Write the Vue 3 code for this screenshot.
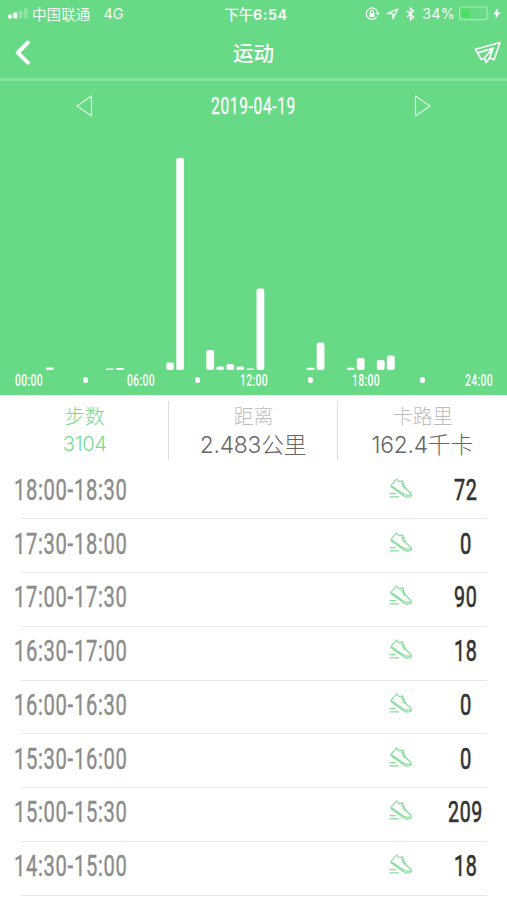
<script setup>
import { h } from 'vue'

// Condensed lettering: the text is squeezed to the given width.
const FitText = (props) =>
  h('svg', { width: props.w, height: props.height, class: 'fit' }, [
    h('text', { x: 0, y: props.base, 'font-size': props.size, textLength: props.w, lengthAdjust: 'spacingAndGlyphs' }, props.text)
  ])
FitText.props = ['text', 'w', 'height', 'base', 'size']

const bars = [
  { slot: 2, v: 2.4 }, { slot: 8, v: 1.6 }, { slot: 9, v: 2 }, { slot: 14, v: 7.5 },
  { slot: 15, v: 212 }, { slot: 18, v: 20 }, { slot: 19, v: 3.6 }, { slot: 20, v: 6 },
  { slot: 21, v: 3.6 }, { slot: 22, v: 1.6 }, { slot: 23, v: 81.5 }, { slot: 28, v: 2.2 },
  { slot: 29, v: 27.5 }, { slot: 32, v: 2.2 }, { slot: 33, v: 12 }, { slot: 35, v: 10 },
  { slot: 36, v: 14.5 }
]
const hours = ['00:00', '06:00', '12:00', '18:00', '24:00']
const rows = [
  ['18:00-18:30', '72'], ['17:30-18:00', '0'], ['17:00-17:30', '90'], ['16:30-17:00', '18'],
  ['16:00-16:30', '0'], ['15:30-16:00', '0'], ['15:00-15:30', '209'], ['14:30-15:00', '18']
]
const valueWidth = { 1: 12, 2: 23.5, 3: 35 }
</script>

<template>
  <main class="screen">
    <section class="top">
      <div class="status">
        <div class="side">
          <svg class="signal" width="20" height="12" fill="#fff">
            <rect x="0" y="6.5" width="4" height="4" rx="1" /><rect x="5.3" y="4.5" width="4" height="6" rx="1" />
            <rect x="10.6" y="2.5" width="4" height="8" rx="1" opacity=".25" /><rect x="15.9" y="0.5" width="4" height="10" rx="1" opacity=".25" />
          </svg>
          <span class="carrier">中国联通</span>
          <span class="net">4G</span>
        </div>
        <span class="time"><span class="noon">下午</span>6:54</span>
        <div class="side right">
          <svg width="15" height="14" viewBox="0 0 15 14" fill="none" stroke="#fff" stroke-width="1.2">
            <path d="M11.8 9.8A5.7 5.7 0 1 1 12.7 6" /><path d="M10.8 5.8h4l-2 2.6z" fill="#fff" stroke="none" />
            <rect x="4.5" y="6.2" width="5" height="3.8" fill="#fff" stroke="none" /><path d="M5.5 6.5V5a1.5 1.5 0 0 1 3 0v1.5" />
          </svg>
          <svg class="loc" width="13" height="12" viewBox="0 0 13 12" fill="none" stroke="#fff" stroke-width="1.3" stroke-linejoin="round"><path d="M1.2 5.7 11.8 1 7 10.8V5.7z" /></svg>
          <svg class="bt" width="9" height="14" viewBox="0 0 9 14" fill="none" stroke="#fff" stroke-width="1.4"><path d="M1 3.9 7.6 10 4.5 12.7V1.3L7.6 4 1 10.1" /></svg>
          <span class="pct">34%</span>
          <svg class="battery" width="32" height="15" viewBox="0 0 32 15">
            <rect x=".6" y="1" width="27.4" height="12.6" rx="2.4" fill="none" stroke="#a8e9b8" stroke-width="1.2" />
            <rect x="2.2" y="2.7" width="8.8" height="9.2" rx="1" fill="#4be264" /><path d="M30 5.5q1.5 1.8 0 3.6z" fill="#b6edc3" />
          </svg>
          <svg class="bolt" width="8" height="13" viewBox="0 0 8 13" fill="#fff"><path d="M4.7 1 .4 7.4h2.8L2.5 12l4.9-6.7H4.5z" /></svg>
        </div>
      </div>
      <header class="nav">
        <svg width="18" height="26" viewBox="0 0 18 26" fill="none" stroke="#fff" stroke-width="4" stroke-linejoin="round"><path d="M15 1.4 3.8 12.6 15 23.8" /></svg>
        <h1>运动</h1>
        <svg class="send" width="28" height="24" viewBox="0 0 28 24" fill="none" stroke="#fff" stroke-width="1.7" stroke-linejoin="round" stroke-linecap="round"><path d="M1.5 8.3 26 1.5 20 18.8l-4.2-2-3.8 4.8-1.4-4.4-3.4 1.2z" /><path d="M4.8 11.6 19 7.2 10.6 16.8M19 7.2l-3.2 9.4" /></svg>
      </header>
      <div class="date">
        <svg width="17" height="22" viewBox="0 0 17 22" fill="none" stroke="#d9f6df" stroke-width="1.2" stroke-linejoin="round"><path d="M15.5 1v20L1 11z" /></svg>
        <FitText class="day" text="2019-04-19" :w="85" :height="24" :base="20.4" :size="24" />
        <svg width="17" height="22" viewBox="0 0 17 22" fill="none" stroke="#d9f6df" stroke-width="1.2" stroke-linejoin="round"><path d="M1.5 1v20L16 11z" /></svg>
      </div>
      <svg class="chart" width="507" height="240" fill="#fff">
        <rect v-for="b in bars" :key="b.slot" :x="25.8 + b.slot * 10.03" :y="240 - b.v" width="7.8" :height="b.v" :rx="Math.min(2, b.v / 2)" />
      </svg>
      <div class="axis">
        <template v-for="(t, i) in hours" :key="t">
          <i v-if="i" class="dot"></i>
          <FitText :text="t" :w="28" :height="16" :base="13.5" :size="15.8" />
        </template>
      </div>
    </section>
    <section class="summary">
      <div class="cell active"><span class="label">步数</span><span class="num small">3104</span></div>
      <div class="cell"><span class="label">距离</span><span class="num">2.483公里</span></div>
      <div class="cell"><span class="label">卡路里</span><span class="num">162.4千卡</span></div>
    </section>
    <ul class="list">
      <li v-for="r in rows" :key="r[0]">
        <FitText class="period" :text="r[0]" :w="113.5" :height="30" :base="24.4" :size="29.8" />
        <svg class="shoe" width="24" height="22" viewBox="0 0 24 22" fill="none" stroke="#86dd9c" stroke-width="1.2" stroke-linejoin="round" stroke-linecap="round">
          <path d="M2.3 6.8 7.8.9q.8 2 2.3 2.5 1.8.5 3.5-.7l1.1 4.5 1.5 2.8 5.5 5.3q1.6 2.8-.8 3.4-2.8 1-5.9-.8L2.4 8.9q-1-.9-.1-2.1z" />
          <path d="M2.6 7.8 14.7 16.2q2.8 1.6 6.8.6M12.4 6l2-.9M13.4 8.1l2-.9M14.6 10.1l1.8-.9M1 15.6h5.3M1 18.8h8.5" />
        </svg>
        <span class="value"><FitText :text="r[1]" :w="valueWidth[r[1].length]" :height="30" :base="24.4" :size="29.8" /></span>
      </li>
    </ul>
  </main>
</template>

<style>
body { margin: 0; background: #fff; }
</style>
<style scoped>
.screen { width: 507px; height: 900px; overflow: hidden; background: #fff; font-family: Inter, "Noto Sans CJK SC", sans-serif; }
.fit { display: block; overflow: visible; font-family: Roboto, sans-serif; fill: currentColor; flex: none; letter-spacing: 1px; }
.top { height: 394.5px; background: #68d985; color: #fff; }
.status { height: 27px; display: grid; grid-template-columns: 1fr auto 1fr; align-items: center; padding: 0 6px 0 8px; }
.side { display: flex; align-items: center; height: 27px; }
.right { justify-content: flex-end; }
.carrier { font-size: 14.6px; margin-left: 4px; opacity: .9; }
.net { font-size: 14.5px; margin-left: 13px; opacity: .9; }
.time { font-size: 14.3px; font-weight: 600; letter-spacing: .6px; padding-left: 3px; }
.noon { font-weight: 500; letter-spacing: 0; }
.loc { margin-left: 6px; }
.bt { margin-left: 7px; }
.pct { font-size: 14.3px; margin: 0 4px 0 7px; opacity: .95; letter-spacing: .2px; }
.bolt { margin-left: 2px; }
.nav { height: 51px; display: flex; align-items: center; justify-content: space-between; padding: 0 5px 0 14px; border-bottom: 3px solid #84e19c; }
h1 { margin: 0 0 2px; font-size: 20.5px; font-weight: 500; padding-left: 1px; }
.date { height: 49px; display: flex; align-items: center; justify-content: space-between; padding: 0 76px; }
.day { stroke: currentColor; stroke-width: .3px; }
.chart { display: block; }
.axis { height: 20px; display: flex; align-items: center; justify-content: space-between; padding: 0 14px 0 15px; }
.axis .fit { font-weight: 500; letter-spacing: .5px; }
.dot { width: 5.4px; height: 5.4px; border-radius: 50%; background: #fff; }
.summary { height: 71.5px; display: grid; grid-template-columns: 168.5px 169px 1fr; }
.cell { margin: 6px 0; padding-top: 2px; box-sizing: border-box; height: 59px; display: flex; flex-direction: column; align-items: center; color: #666; }
.cell + .cell { box-shadow: -1px 0 0 #ddd; }
.label { font-size: 20px; line-height: 28px; color: #bdbdbd; font-weight: 300; padding-left: 1px; }
.num { font-size: 22.8px; line-height: 28px; font-weight: 300; letter-spacing: -.2px; }
.active, .active .label { color: #75dc8f; }
.small { font-size: 20.3px; line-height: 26px; letter-spacing: -.4px; padding-left: 1px; }
.list { list-style: none; margin: 0; padding: 0; }
li { height: 53.75px; display: flex; align-items: center; padding: 0 20px 4px 13.5px; box-sizing: border-box; background: linear-gradient(#e9e9e9, #e9e9e9) 21px bottom / 466px 1.3px no-repeat; }
.period { color: #8c8c8c; stroke: currentColor; stroke-width: .45px; }
.shoe { margin-left: 262px; margin-bottom: 4px; }
.value { flex: 1; display: flex; justify-content: center; color: #333; padding-left: 31px; }
.value .fit { stroke: currentColor; stroke-width: .7px; }
</style>
